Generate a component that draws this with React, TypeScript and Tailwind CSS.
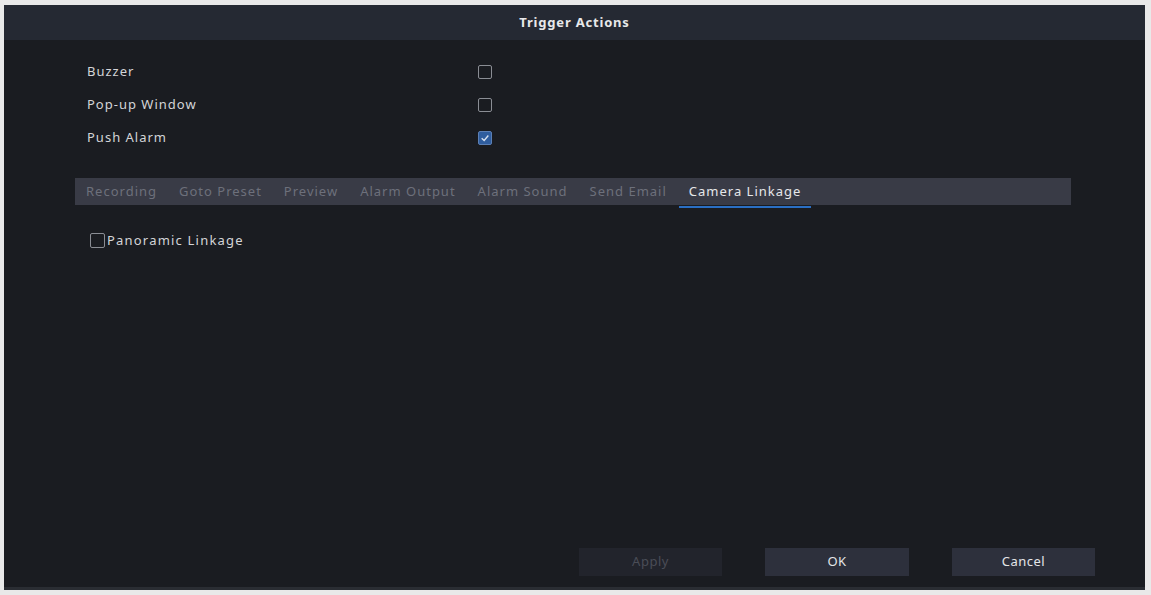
import React from "react";

const tabs = ["Recording", "Goto Preset", "Preview", "Alarm Output", "Alarm Sound", "Send Email", "Camera Linkage"];

const Box: React.FC<{ checked?: boolean; size?: string }> = ({ checked, size = "w-[14px] h-[14px]" }) =>
  checked ? (
    <span className={`${size} rounded-[2px] bg-[#2f5d9e] border border-[#5b7fb5] flex items-center justify-center`}>
      <svg viewBox="0 0 12 12" className="w-[10px] h-[10px]">
        <path d="M2 6.2 L5 9 L10 3" fill="none" stroke="#d8e2f0" strokeWidth="1.6" />
      </svg>
    </span>
  ) : (
    <span className={`${size} rounded-[2px] border-[1.5px] border-[#8a8d94]`} />
  );

const App: React.FC = () => {
  const rows = [
    { label: "Buzzer", checked: false },
    { label: "Pop-up Window", checked: false },
    { label: "Push Alarm", checked: true },
  ];

  return (
    <div
      className="w-[1151px] h-[595px] bg-[#e9e9e9] pt-[5px] pl-[4px] pr-[6px] pb-[5px]"
      style={{ fontFamily: '"Noto Sans", "Open Sans", sans-serif' }}
    >
      <div className="w-full h-full flex flex-col bg-[#1a1c21] border-b-[3px] border-[#2a2d33]">
        <div className="h-[35px] bg-[#252933] flex items-center justify-center text-[13px] font-bold text-[#e8e8ea] tracking-[0.8px]">
          Trigger Actions
        </div>

        <div className="flex-1 flex flex-col pl-[71px] pr-[74px]">
          <div className="pt-[23px] flex flex-col gap-[15px]">
            {rows.map((r) => (
              <div key={r.label} className="flex items-center h-[18px] pl-[12px]">
                <span className="w-[391px] text-[13px] text-[#d4d5d8] tracking-[1px]">{r.label}</span>
                <Box checked={r.checked} />
              </div>
            ))}
          </div>

          <div className="mt-[31px] h-[27px] bg-[#393b46] flex items-stretch pl-[11px] gap-[22px] text-[13px] tracking-[1px]">
            {tabs.map((t, i) =>
              i === tabs.length - 1 ? (
                <span key={t} className="relative flex items-center px-[10px] -ml-[10px] text-[#e6e7ea]">
                  {t}
                  <span className="absolute left-0 right-0 -bottom-[3px] h-[2px] bg-[#2a6fc4]" />
                </span>
              ) : (
                <span key={t} className="flex items-center text-[#6d707b]">
                  {t}
                </span>
              )
            )}
          </div>

          <div className="mt-[26px] pl-[15px] flex items-center gap-[2px]">
            <Box size="w-[15px] h-[15px]" />
            <span className="text-[13px] text-[#d4d5d8] tracking-[1.2px]">Panoramic Linkage</span>
          </div>

          <div className="mt-auto mb-[11px] -mr-[24px] flex justify-end gap-[43px]">
            <button className="w-[143px] h-[28px] bg-[#22242c] text-[13px] text-[#4a4d57] tracking-[0.5px]">Apply</button>
            <button className="w-[144px] h-[28px] bg-[#2d303c] text-[13px] text-[#e4e5e8] tracking-[0.5px]">OK</button>
            <button className="w-[143px] h-[28px] bg-[#2d303c] text-[13px] text-[#e4e5e8] tracking-[0.5px]">Cancel</button>
          </div>
        </div>
      </div>
    </div>
  );
};

export default App;
